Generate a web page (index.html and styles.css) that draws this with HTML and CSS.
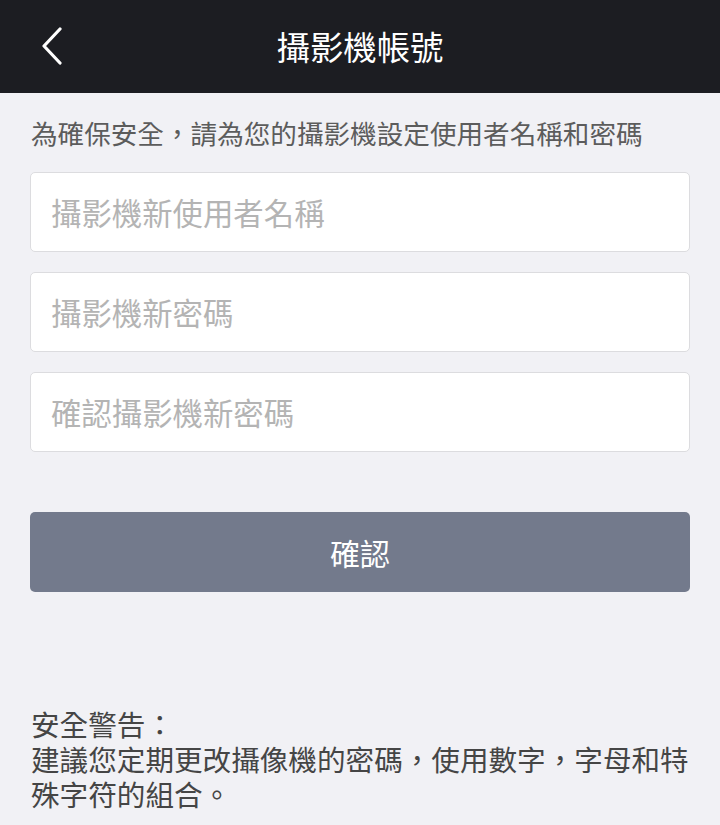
FILE: index.html
```html
<!DOCTYPE html>
<html lang="zh-Hant">
<head>
<meta charset="utf-8">
<title>攝影機帳號</title>
<link rel="stylesheet" href="styles.css">
</head>
<body>
<header class="topbar">
  <button class="back" aria-label="返回">
    <svg width="24" height="38" viewBox="0 0 24 38"><polyline points="20,2 4,19 20,36" fill="none" stroke="#fff" stroke-width="3.2" stroke-linecap="round" stroke-linejoin="round"/></svg>
  </button>
  <h1 class="title">攝影機帳號</h1>
</header>
<main class="content">
  <p class="intro">為確保安全，請為您的攝影機設定使用者名稱和密碼</p>
  <div class="fields">
    <input class="field" type="text" placeholder="攝影機新使用者名稱">
    <input class="field" type="password" placeholder="攝影機新密碼">
    <input class="field" type="password" placeholder="確認攝影機新密碼">
  </div>
  <button class="confirm">確認</button>
  <div class="warning">
    <p class="warning-title">安全警告：</p>
    <p class="warning-text">建議您定期更改攝像機的密碼，使用數字，字母和特殊字符的組合。</p>
  </div>
</main>
</body>
</html>
```

FILE: styles.css
```css
* { box-sizing: border-box; }
html, body {
  margin: 0;
  padding: 0;
  background: #f1f1f5;
  font-family: "Noto Sans CJK TC", "Noto Sans", sans-serif;
}
.topbar {
  position: relative;
  height: 93px;
  background: #1c1d22;
  display: flex;
  align-items: center;
  justify-content: center;
}
.back {
  position: absolute;
  left: 40px;
  top: 27px;
  width: 24px;
  height: 38px;
  padding: 0;
  border: 0;
  background: none;
  display: block;
}
.back svg { display: block; }
.title {
  margin: -2px 0 0;
  color: #ffffff;
  font-size: 33.4px;
  font-weight: 400;
  line-height: 40px;
}
.content {
  padding: 22px 30px 0;
}
.intro {
  margin: 0;
  font-size: 26.6px;
  line-height: 36px;
  color: #5c5c5c;
  padding-left: 1px;
  white-space: nowrap;
}
.fields {
  margin-top: 21px;
  display: flex;
  flex-direction: column;
  gap: 20px;
}
.field {
  height: 80px;
  width: 100%;
  border: 1px solid #dcdcdf;
  border-radius: 5px;
  background: #ffffff;
  padding: 0 20px;
  font-family: inherit;
  font-size: 30.4px;
  color: #333;
  outline: none;
}
.field::placeholder { color: #b4b4b4; }
.confirm {
  display: block;
  width: 100%;
  height: 80px;
  margin-top: 60px;
  border: 0;
  border-radius: 5px;
  background: #737a8c;
  color: #ffffff;
  font-family: inherit;
  font-size: 30px;
  padding: 0;
}
.warning {
  margin: 114px -6px 0 1px;
  font-size: 28.6px;
  line-height: 35px;
  color: #454545;
}
.warning p { margin: 0; }
```
